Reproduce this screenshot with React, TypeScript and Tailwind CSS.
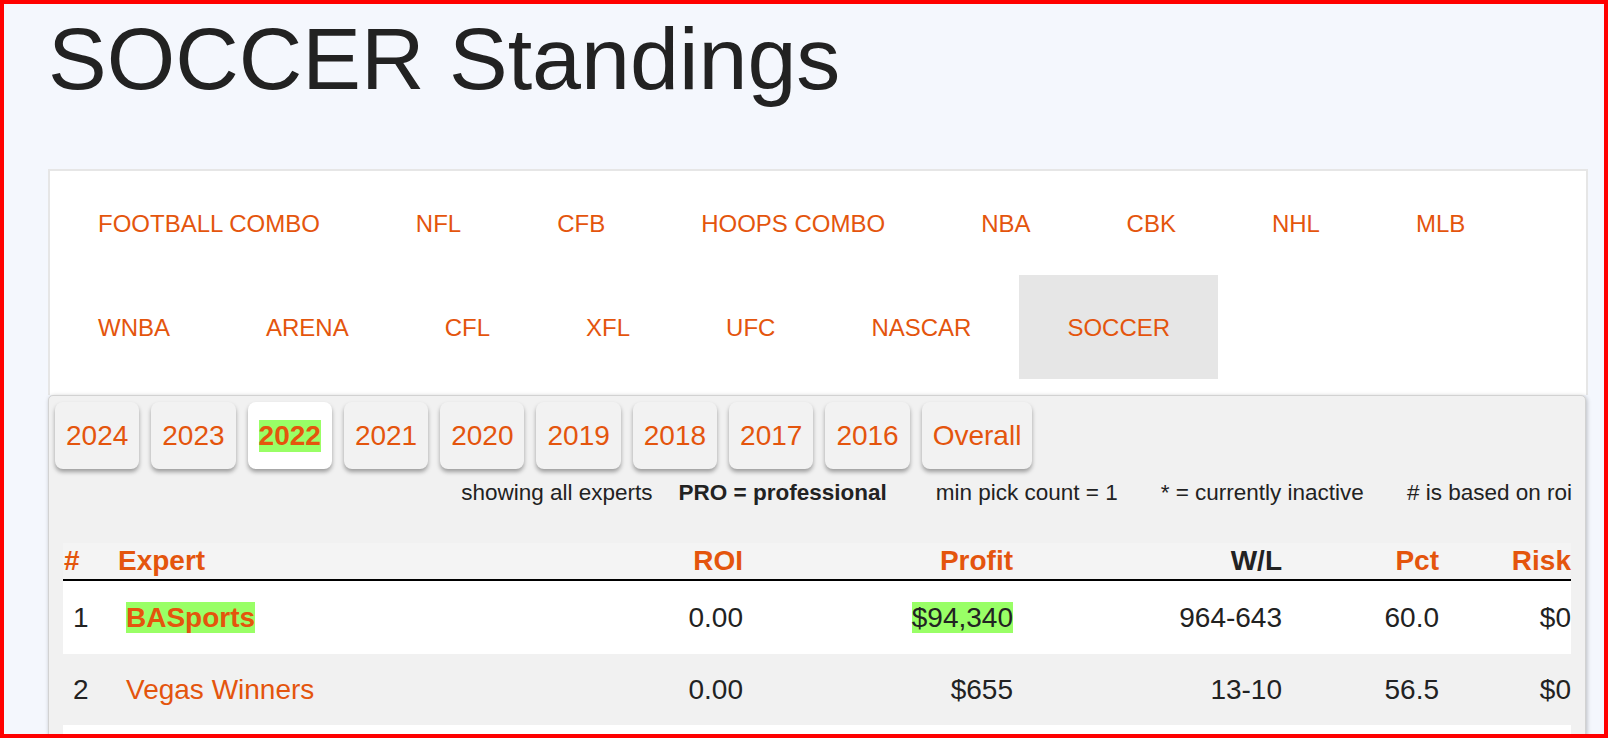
import React from "react";

const ORANGE = "text-[#e4550d]";

const row1 = ["FOOTBALL COMBO", "NFL", "CFB", "HOOPS COMBO", "NBA", "CBK", "NHL", "MLB"];
const row2 = ["WNBA", "ARENA", "CFL", "XFL", "UFC", "NASCAR", "SOCCER"];
const years = ["2024", "2023", "2022", "2021", "2020", "2019", "2018", "2017", "2016", "Overall"];

const cols = "grid grid-cols-[55px_442px_183px_270px_269px_157px_132px]";

export default function App() {
  return (
    <div className="h-[738px] w-full overflow-hidden border-4 border-[#ff0000] bg-[#f4f7fd] font-['Liberation_Sans',Arial,sans-serif]">
      <div className="pl-[44px] pr-[16px]">
        <h1 className="pt-[4px] text-[88px] leading-[101px] font-normal text-[#222222]">
          SOCCER Standings
        </h1>

        <div className="mt-[60px] border-2 border-b-0 border-[#e6e6e6] bg-white pb-[16px]">
          <ul className="flex flex-wrap">
            {[...row1, ...row2].map((s) => (
              <li key={s}>
                <a
                  className={`block h-[104px] px-[48px] text-[24px] leading-[106px] ${ORANGE} ${
                    s === "SOCCER" ? "bg-[#e6e6e6]" : ""
                  }`}
                >
                  {s}
                </a>
              </li>
            ))}
          </ul>
        </div>

        <div className="mr-[2px] h-[400px] rounded-t-[5px] border border-[#d2d2d2] bg-[#f1f1f1] shadow-[1px_1px_4px_rgba(0,0,0,0.25)]">
          <div className="flex gap-[12px] pl-[6px] pt-[6px]">
            {years.map((y) => (
              <div
                key={y}
                className={`flex h-[67px] items-center rounded-[8px] px-[11px] text-[28px] leading-[32px] shadow-[0_3px_4px_rgba(0,0,0,0.35)] ${
                  y === "2022" ? "bg-white" : "bg-[#f2f2f2]"
                } ${ORANGE}`}
              >
                {y === "2022" ? (
                  <span className="bg-[#99ff66] font-bold">{y}</span>
                ) : (
                  y
                )}
              </div>
            ))}
          </div>

          <div className="mt-[11px] flex h-[25px] items-center justify-end pr-[13px] text-[22.5px] leading-[25px] text-[#222222]">
            <span>showing all experts</span>
            <span className="ml-[26px] font-bold">PRO = professional</span>
            <span className="ml-[49px]">min pick count = 1</span>
            <span className="ml-[43px]">* = currently inactive</span>
            <span className="ml-[43px]"># is based on roi</span>
          </div>

          <div className="mt-[38px] px-[14px]">
            <div className={`${cols} h-[38px] items-center border-b-2 border-black bg-[#f4f4f4] text-[28px] font-bold leading-[32px] ${ORANGE}`}>
              <div className="pl-[1px]">#</div>
              <div>Expert</div>
              <div className="text-right">ROI</div>
              <div className="text-right">Profit</div>
              <div className="text-right text-[#222222]">W/L</div>
              <div className="text-right">Pct</div>
              <div className="text-right">Risk</div>
            </div>

            <div className={`${cols} h-[73px] items-center bg-white text-[28px] leading-[32px] text-[#222222]`}>
              <div className="pl-[10px]">1</div>
              <div className="pl-[8px]">
                <span className={`bg-[#99ff66] font-bold ${ORANGE}`}>BASports</span>
              </div>
              <div className="text-right">0.00</div>
              <div className="text-right">
                <span className="bg-[#99ff66]">$94,340</span>
              </div>
              <div className="text-right">964-643</div>
              <div className="text-right">60.0</div>
              <div className="text-right">$0</div>
            </div>

            <div className={`${cols} h-[71px] items-center bg-[#f1f1f1] text-[28px] leading-[32px] text-[#222222]`}>
              <div className="pl-[10px]">2</div>
              <div className={`pl-[8px] ${ORANGE}`}>Vegas Winners</div>
              <div className="text-right">0.00</div>
              <div className="text-right">$655</div>
              <div className="text-right">13-10</div>
              <div className="text-right">56.5</div>
              <div className="text-right">$0</div>
            </div>

            <div className="h-[71px] bg-white" />
          </div>
        </div>
      </div>
    </div>
  );
}
